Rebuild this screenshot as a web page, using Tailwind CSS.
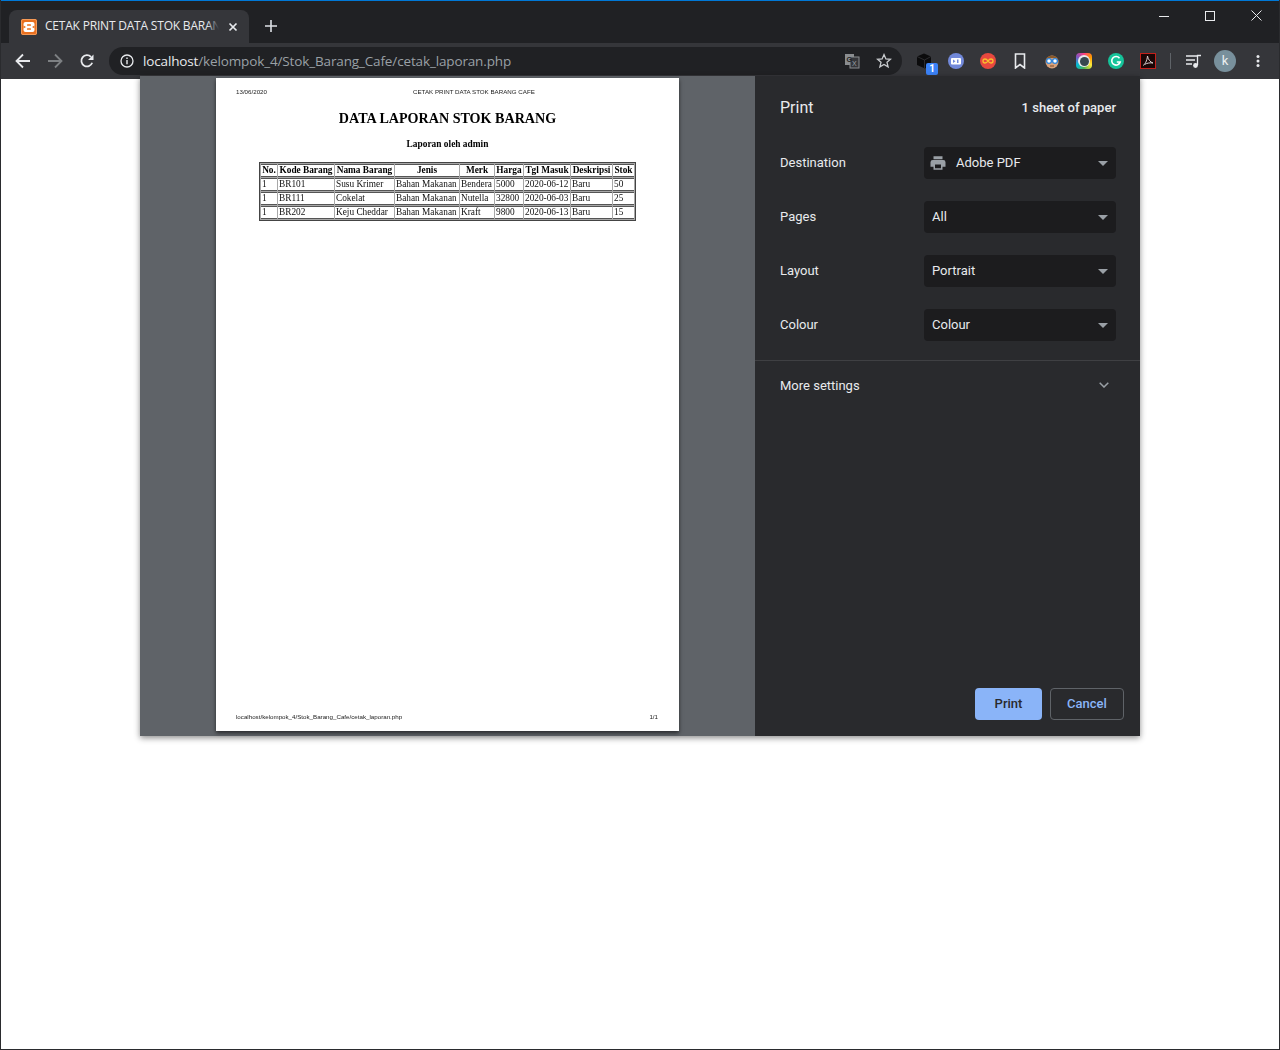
<!DOCTYPE html>
<html lang="en">
<head>
  <meta charset="UTF-8" />
  <title>CETAK PRINT DATA STOK BARANG CAFE</title>
  <script src="https://cdn.jsdelivr.net/npm/@tailwindcss/browser@4"></script>
</head>
<body class="bg-white">
<div class="relative w-[1280px] h-[1050px] overflow-hidden border-x border-b border-[#2a2b2e] font-['Roboto',sans-serif]">

  <!-- Tab strip -->
  <header class="h-[43px] bg-[#202124] border-t border-[#0078d7] flex items-end pl-[9px] -mx-px">
    <div class="w-[240px] h-[33px] bg-[#35363a] rounded-t-lg flex items-center pl-[12px] relative">
      <svg class="w-4 h-4 shrink-0" viewBox="0 0 16 16"><rect width="16" height="16" rx="2" fill="#e9701f"/><rect x=".5" y=".5" width="15" height="15" rx="1.500" fill="none" stroke="#f59a57"/><rect x="2.500" y="3" width="11" height="10" rx="2" fill="#fff"/><path d="M2.500 6.500L5 8l-2.500 1.500zM13.500 6.500L11 8l2.500 1.500z" fill="#e9701f"/><rect x="6" y="5.200" width="4" height="1.600" rx=".6" fill="#e9701f"/><rect x="6" y="9.200" width="4" height="1.600" rx=".6" fill="#e9701f"/></svg>
      <span class="ml-[8px] pb-[2px] w-[174px] overflow-hidden whitespace-nowrap text-[12px] text-[#e8eaed] font-['Open_Sans',sans-serif] tracking-[-0.2px]">CETAK PRINT DATA STOK BARANG CAFE</span>
      <div class="absolute left-[198px] top-[8px] w-[12px] h-[18px] bg-linear-to-r from-[#35363a]/0 to-[#35363a]"></div>
      <svg class="w-[10px] h-[10px] absolute left-[219px] top-[12px]" viewBox="0 0 10 10"><path d="M1.500 1.500l7 7M8.500 1.500l-7 7" stroke="#e8eaed" stroke-width="1.700"/></svg>
    </div>
    <svg class="w-3 h-3 ml-[16px] mb-[11px]" viewBox="0 0 12 12"><path d="M6 0v12M0 6h12" stroke="#dee1e6" stroke-width="1.600"/></svg>
    <div class="ml-auto self-start flex items-center text-[#e8eaed]">
      <svg class="w-[10px] h-[10px] mr-[36px] mt-[9px]" viewBox="0 0 10 10"><path d="M0 5.500h10" stroke="#e8eaed" stroke-width="1"/></svg>
      <svg class="w-[10px] h-[10px] mr-[36px] mt-[9px]" viewBox="0 0 10 10"><rect x=".5" y=".5" width="9" height="9" fill="none" stroke="#e8eaed"/></svg>
      <svg class="w-[11px] h-[11px] mr-[18px] mt-[9px]" viewBox="0 0 11 11"><path d="M.5.5l10 10M10.500.5l-10 10" stroke="#e8eaed"/></svg>
    </div>
  </header>

  <!-- Toolbar -->
  <div class="h-[36px] bg-[#35363a] flex items-center pl-[15px] -mx-px">
    <svg class="w-4 h-4" viewBox="0 0 16 16"><path d="M15 8H2M8 1.500L1.500 8 8 14.500" fill="none" stroke="#e8eaed" stroke-width="1.800"/></svg>
    <svg class="w-4 h-4 ml-[16px]" viewBox="0 0 16 16"><path d="M1 8h13M8 1.500L14.500 8 8 14.500" fill="none" stroke="#7d8083" stroke-width="1.800"/></svg>
    <svg class="w-4 h-4 ml-[16px]" viewBox="0 0 16 16"><path d="M13.200 9.800A5.600 5.600 0 1 1 12 3.900" fill="none" stroke="#e8eaed" stroke-width="1.800"/><path d="M14.500 1.500v5.600H9z" fill="#e8eaed"/></svg>
    <div class="w-[793px] h-[28px] ml-[14px] rounded-full bg-[#202124] flex items-center pl-[11px]">
      <svg class="w-[14px] h-[14px]" viewBox="0 0 14 14"><circle cx="7" cy="7" r="6" fill="none" stroke="#e8eaed" stroke-width="1.300"/><path d="M7 6v4.200M7 3.600v1.400" stroke="#e8eaed" stroke-width="1.400"/></svg>
      <span class="ml-[9px] text-[13.500px] text-[#9aa0a6] font-['Open_Sans',sans-serif] tracking-[-0.14px]"><span class="text-[#e8eaed]">localhost</span>/kelompok_4/Stok_Barang_Cafe/cetak_laporan.php</span>
      <svg class="w-4 h-4 ml-auto" viewBox="0 0 16 16"><rect x="1" y="1" width="9" height="11" fill="#8a8d90"/><rect x="6" y="4" width="9" height="11" fill="#35363a" stroke="#8a8d90"/><text x="2.500" y="9" font-size="7" font-weight="700" fill="#202124" font-family="Liberation Sans">G</text><text x="8" y="12.500" font-size="7" fill="#9aa0a6" font-family="Liberation Sans">X</text></svg>
      <svg class="w-4 h-4 ml-[16px] mr-[10px]" viewBox="0 0 16 16"><path d="M8 1.600l1.900 4.300 4.600.4-3.500 3 1.100 4.600L8 11.500l-4.100 2.400L5 9.300l-3.500-3 4.600-.4z" fill="none" stroke="#c9cccf" stroke-width="1.300"/></svg>
    </div>

    <!-- Extensions -->
    <div class="relative w-4 h-4 ml-[14px]">
      <svg class="w-4 h-4" viewBox="0 0 16 16"><path d="M8 .5l7 3v8.500l-6 3.500-8-3.500V3.500z" fill="#0b0b0c"/><path d="M1 3.500l7.500 3.500 6.500-3.500M8.500 7v8" stroke="#3a3a3d" stroke-width=".7" fill="none"/></svg>
      <span class="absolute left-[10px] top-[10px] w-[12px] h-[12px] rounded-[2px] bg-[#3b82f6] text-white text-[10px] font-bold leading-[12px] text-center">1</span>
    </div>
    <svg class="w-4 h-4 ml-[16px]" viewBox="0 0 16 16"><circle cx="8" cy="8" r="8" fill="#7289da"/><rect x="3" y="5" width="10" height="6.500" rx="1" fill="#fff"/><path d="M5 6.500v3.500l2.500-1.800z" fill="#7289da"/><rect x="9" y="6.500" width="1.500" height="3.500" fill="#7289da"/></svg>
    <svg class="w-4 h-4 ml-[16px]" viewBox="0 0 16 16"><circle cx="8" cy="8" r="8" fill="#e8483f"/><path d="M8 8c-1-1.500-2-2-3-2a2 2 0 0 0 0 4c1 0 2-.5 3-2s2-2 3-2a2 2 0 0 1 0 4c-1 0-2-.5-3-2z" fill="none" stroke="#fbc02d" stroke-width="1.300"/></svg>
    <svg class="w-4 h-4 ml-[16px]" viewBox="0 0 16 16"><path d="M3.500 1h9v14L8 11.500 3.500 15z" fill="none" stroke="#e8eaed" stroke-width="1.600"/></svg>
    <svg class="w-4 h-4 ml-[16px]" viewBox="0 0 16 16"><circle cx="8" cy="9" r="6.500" fill="#d9a27a"/><path d="M1.500 8C2 1 14 1 14.500 8L12 5H5z" fill="#8a5a2b"/><circle cx="5" cy="8" r="2.400" fill="#fff" stroke="#2e86de" stroke-width="1.300"/><circle cx="11" cy="8" r="2.400" fill="#fff" stroke="#2e86de" stroke-width="1.300"/><path d="M6 13h4" stroke="#7a4a2a"/></svg>
    <div class="w-4 h-4 ml-[16px] rounded-[4px] bg-[conic-gradient(#ff3d7f,#ff9800,#ffeb3b,#4caf50,#00bcd4,#7e57c2,#ff3d7f)] flex items-center justify-center">
      <div class="w-[12px] h-[12px] rounded-full bg-[#e8eaed] flex items-center justify-center"><div class="w-[9px] h-[9px] rounded-full bg-[#37474f]"></div></div>
    </div>
    <svg class="w-4 h-4 ml-[16px]" viewBox="0 0 16 16"><circle cx="8" cy="8" r="8" fill="#15c39a"/><path d="M11.500 5.200A4.300 4.300 0 1 0 12.200 9H8.800" fill="none" stroke="#fff" stroke-width="1.600"/></svg>
    <svg class="w-4 h-4 ml-[16px]" viewBox="0 0 16 16"><rect x=".5" y=".5" width="15" height="15" fill="#1b0606" stroke="#c4201a"/><path d="M3 12.500C5 11.500 7 8 7.500 3c.3 3 3 6.500 5.500 7-2.500-.5-6 0-8.500 1.500" fill="none" stroke="#d8d0d0" stroke-width="1"/></svg>
    <div class="w-px h-[16px] bg-[#5f6368] ml-[14px]"></div>
    <svg class="w-4 h-4 ml-[15px]" viewBox="0 0 16 16"><path d="M0 3h11M0 7h9M0 11h6" stroke="#e8eaed" stroke-width="1.300"/><path d="M11.500 12V2.500H15" fill="none" stroke="#e8eaed" stroke-width="1.300"/><circle cx="9.500" cy="12.500" r="2.400" fill="#e8eaed"/></svg>
    <div class="w-[22px] h-[22px] ml-[12px] rounded-full bg-[#78909c] text-[#eceff1] text-[13px] leading-[22px] text-center">k</div>
    <svg class="w-1 h-3 ml-[20px]" viewBox="0 0 4 12"><circle cx="2" cy="1.500" r="1.500" fill="#e8eaed"/><circle cx="2" cy="6" r="1.500" fill="#e8eaed"/><circle cx="2" cy="10.500" r="1.500" fill="#e8eaed"/></svg>
  </div>

  <!-- Print dialog -->
  <div class="absolute left-[139px] top-[76px] w-[1000px] h-[660px] flex shadow-[0_2px_6px_rgba(0,0,0,0.45)]">
    <div class="w-[615px] bg-[#5f6368] pl-[76px] pt-[2px]">
      <div class="w-[463px] h-[653px] bg-white shadow-[0_2px_4px_rgba(0,0,0,0.6)] relative text-black">
        <div class="blur-[0.3px]">
          <div class="flex pt-[10px] pl-[20px] text-[6.200px] leading-[7px] font-['Liberation_Sans',sans-serif] text-[#222]">
            <span class="w-[177px]">13/06/2020</span><span>CETAK PRINT DATA STOK BARANG CAFE</span>
          </div>
          <h1 class="mt-[15px] text-center text-[14.100px] leading-[17px] font-bold font-['Liberation_Serif',serif]">DATA LAPORAN STOK BARANG</h1>
          <p class="mt-[12px] text-center text-[9.400px] leading-[11px] font-bold font-['Liberation_Serif',serif]">Laporan oleh admin</p>
          <table class="ml-[43px] mt-[12px] w-[377px] table-fixed border-separate border-spacing-[1px] bg-[#a8a8a8] border border-[#444] text-[9.300px] leading-[11px] font-['Liberation_Serif',serif] text-[#111]">
            <colgroup>
              <col class="w-[16px]"/><col class="w-[56px]"/><col class="w-[59px]"/><col class="w-[64px]"/><col class="w-[34px]"/><col class="w-[28px]"/><col class="w-[46px]"/><col class="w-[41px]"/><col class="w-[21px]"/>
            </colgroup>
            <thead class="font-bold text-black">
              <tr class="h-[13px]">
                <th class="bg-white border-y border-[#555] p-0 whitespace-nowrap">No.</th><th class="bg-white border-y border-[#555] p-0 whitespace-nowrap">Kode Barang</th><th class="bg-white border-y border-[#555] p-0 whitespace-nowrap">Nama Barang</th><th class="bg-white border-y border-[#555] p-0">Jenis</th><th class="bg-white border-y border-[#555] p-0">Merk</th><th class="bg-white border-y border-[#555] p-0">Harga</th><th class="bg-white border-y border-[#555] p-0 whitespace-nowrap">Tgl Masuk</th><th class="bg-white border-y border-[#555] p-0">Deskripsi</th><th class="bg-white border-y border-[#555] p-0">Stok</th>
              </tr>
            </thead>
            <tbody>
              <tr class="h-[13px]">
                <td class="bg-white border-y border-[#555] p-0 pl-px">1</td><td class="bg-white border-y border-[#555] p-0 pl-px">BR101</td><td class="bg-white border-y border-[#555] p-0 pl-px whitespace-nowrap">Susu Krimer</td><td class="bg-white border-y border-[#555] p-0 pl-px whitespace-nowrap">Bahan Makanan</td><td class="bg-white border-y border-[#555] p-0 pl-px">Bendera</td><td class="bg-white border-y border-[#555] p-0 pl-px">5000</td><td class="bg-white border-y border-[#555] p-0 pl-px whitespace-nowrap">2020-06-12</td><td class="bg-white border-y border-[#555] p-0 pl-px">Baru</td><td class="bg-white border-y border-[#555] p-0 pl-px">50</td>
              </tr>
              <tr class="h-[13px]">
                <td class="bg-white border-y border-[#555] p-0 pl-px">1</td><td class="bg-white border-y border-[#555] p-0 pl-px">BR111</td><td class="bg-white border-y border-[#555] p-0 pl-px whitespace-nowrap">Cokelat</td><td class="bg-white border-y border-[#555] p-0 pl-px whitespace-nowrap">Bahan Makanan</td><td class="bg-white border-y border-[#555] p-0 pl-px">Nutella</td><td class="bg-white border-y border-[#555] p-0 pl-px">32800</td><td class="bg-white border-y border-[#555] p-0 pl-px whitespace-nowrap">2020-06-03</td><td class="bg-white border-y border-[#555] p-0 pl-px">Baru</td><td class="bg-white border-y border-[#555] p-0 pl-px">25</td>
              </tr>
              <tr class="h-[13px]">
                <td class="bg-white border-y border-[#555] p-0 pl-px">1</td><td class="bg-white border-y border-[#555] p-0 pl-px">BR202</td><td class="bg-white border-y border-[#555] p-0 pl-px whitespace-nowrap">Keju Cheddar</td><td class="bg-white border-y border-[#555] p-0 pl-px whitespace-nowrap">Bahan Makanan</td><td class="bg-white border-y border-[#555] p-0 pl-px">Kraft</td><td class="bg-white border-y border-[#555] p-0 pl-px">9800</td><td class="bg-white border-y border-[#555] p-0 pl-px whitespace-nowrap">2020-06-13</td><td class="bg-white border-y border-[#555] p-0 pl-px">Baru</td><td class="bg-white border-y border-[#555] p-0 pl-px">15</td>
              </tr>
            </tbody>
          </table>
        </div>
        <div class="absolute left-[20px] right-[21px] bottom-[11px] flex justify-between text-[6.200px] leading-[7px] font-['Liberation_Sans',sans-serif] text-[#222] blur-[0.3px]">
          <span>localhost/kelompok_4/Stok_Barang_Cafe/cetak_laporan.php</span><span>1/1</span>
        </div>
      </div>
    </div>

    <!-- Settings panel -->
    <aside class="w-[385px] bg-[#292a2d] flex flex-col text-[13px] text-[#e8eaed]">
      <div class="flex justify-between items-center pl-[25px] pr-[24px] pt-[22px]">
        <span class="text-[16px] leading-[20px]">Print</span>
        <span class="font-medium leading-[20px]">1 sheet of paper</span>
      </div>
      <div class="flex flex-col gap-[22px] mt-[29px] pl-[25px] pr-[24px]">
        <div class="flex items-center h-[32px]">
          <span class="w-[144px]">Destination</span>
          <div class="w-[192px] h-[32px] bg-[#1c1c1e] rounded flex items-center pl-[5px] pr-[8px]">
            <svg class="w-[18px] h-[18px]" viewBox="0 0 24 24"><path d="M19 8H5a3 3 0 0 0-3 3v6h4v4h12v-4h4v-6a3 3 0 0 0-3-3zm-3 11H8v-5h8zM18 3H6v4h12z" fill="#9aa0a6"/></svg>
            <span class="ml-[9px]">Adobe PDF</span>
            <svg class="w-[10px] h-[5px] ml-auto" viewBox="0 0 10 5"><path d="M0 0h10L5 5z" fill="#9aa0a6"/></svg>
          </div>
        </div>
        <div class="flex items-center h-[32px]">
          <span class="w-[144px]">Pages</span>
          <div class="w-[192px] h-[32px] bg-[#1c1c1e] rounded flex items-center pl-[8px] pr-[8px]">
            <span>All</span>
            <svg class="w-[10px] h-[5px] ml-auto" viewBox="0 0 10 5"><path d="M0 0h10L5 5z" fill="#9aa0a6"/></svg>
          </div>
        </div>
        <div class="flex items-center h-[32px]">
          <span class="w-[144px]">Layout</span>
          <div class="w-[192px] h-[32px] bg-[#1c1c1e] rounded flex items-center pl-[8px] pr-[8px]">
            <span>Portrait</span>
            <svg class="w-[10px] h-[5px] ml-auto" viewBox="0 0 10 5"><path d="M0 0h10L5 5z" fill="#9aa0a6"/></svg>
          </div>
        </div>
        <div class="flex items-center h-[32px]">
          <span class="w-[144px]">Colour</span>
          <div class="w-[192px] h-[32px] bg-[#1c1c1e] rounded flex items-center pl-[8px] pr-[8px]">
            <span>Colour</span>
            <svg class="w-[10px] h-[5px] ml-auto" viewBox="0 0 10 5"><path d="M0 0h10L5 5z" fill="#9aa0a6"/></svg>
          </div>
        </div>
      </div>
      <div class="mt-[19px] border-t border-[#3f4043] flex items-center justify-between h-[50px] pl-[25px] pr-[31px]">
        <span>More settings</span>
        <svg class="w-[10px] h-[6px] mb-px" viewBox="0 0 10 6"><path d="M.7.7L5 5l4.300-4.300" fill="none" stroke="#9aa0a6" stroke-width="1.500"/></svg>
      </div>
      <div class="mt-auto flex justify-end gap-[8px] pr-[16px] pb-[16px]">
        <button class="w-[67px] h-[32px] rounded bg-[#8ab4f8] text-[#292a2d] font-medium">Print</button>
        <button class="w-[74px] h-[32px] rounded border border-[#5f6368] text-[#8ab4f8] font-medium">Cancel</button>
      </div>
    </aside>
  </div>
</div>
</body>
</html>
